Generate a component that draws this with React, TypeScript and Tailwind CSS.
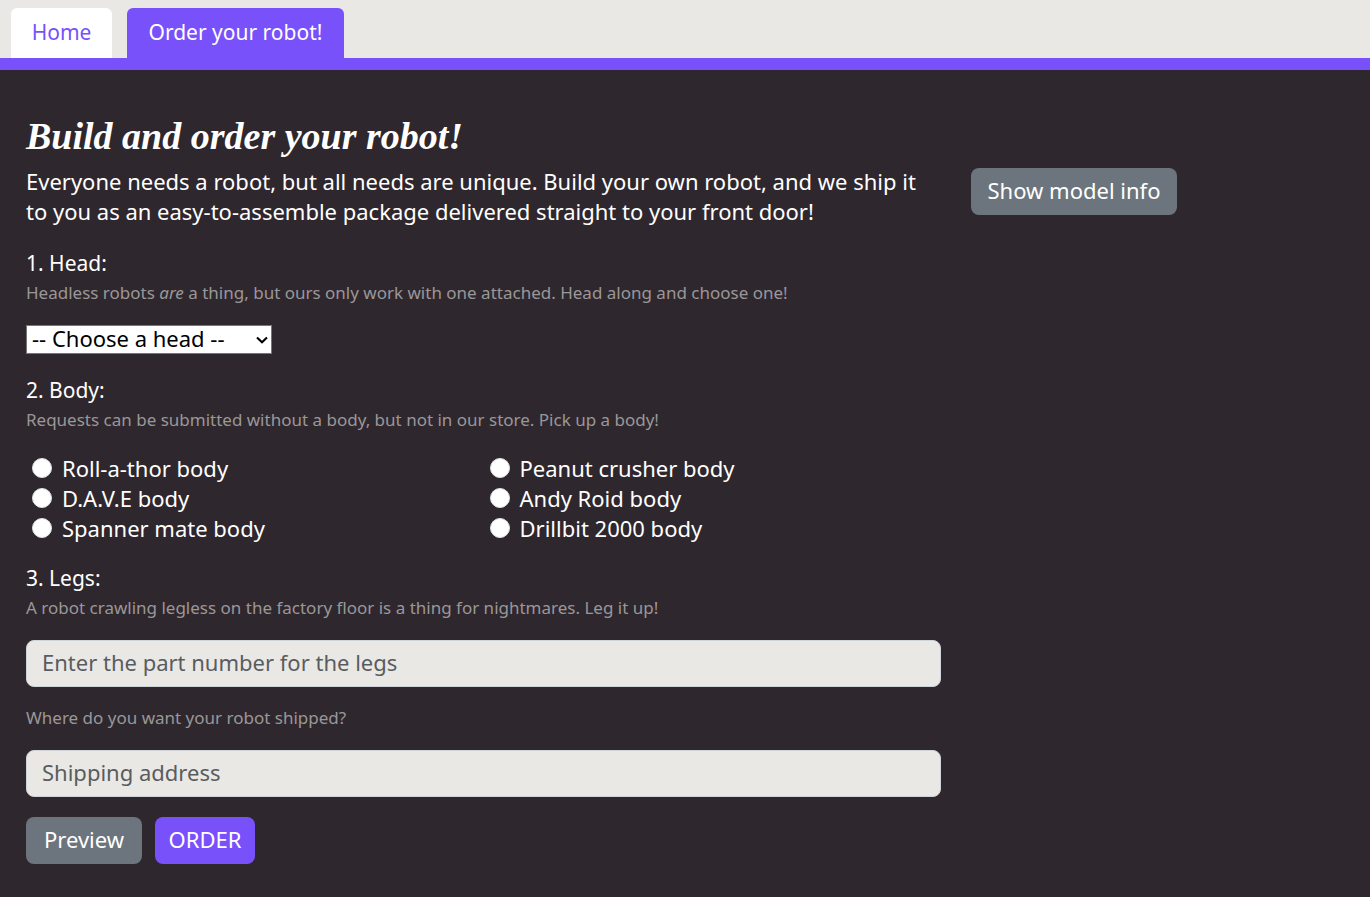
import type { ReactNode } from 'react';

const bodies = [
  'Roll-a-thor body',
  'Peanut crusher body',
  'D.A.V.E body',
  'Andy Roid body',
  'Spanner mate body',
  'Drillbit 2000 body',
];

const fieldClass =
  "block h-[47px] w-full rounded-lg border border-[#ced4da] bg-[#e9e8e4] px-[15px] pb-[3px] text-[22px] leading-[30px] text-[#212529] placeholder:text-[#595c5f] placeholder:opacity-100";

const buttonClass =
  'flex h-[47px] items-center justify-center whitespace-nowrap rounded-lg pb-[3px] text-[22px] leading-[30px] text-white';

function Hint({ children }: { children: ReactNode }) {
  return <p className="mb-[17px] text-[17px] leading-[30px] text-[#9a9798]">{children}</p>;
}

export default function App() {
  return (
    <div className="min-h-screen bg-[#2f272e] font-['Noto_Sans',sans-serif] text-[22px] leading-[30px] text-white">
      <header className="border-b-[12px] border-[#7851fb] bg-[#e9e8e4] text-[21px]">
        <nav className="flex gap-[15px] px-[11px] pt-2">
          <a
            href="#/"
            className="flex h-[50px] w-[101px] items-center justify-center rounded-t-md bg-white pb-[2px] text-[#7851fb]"
          >
            Home
          </a>
          <a
            href="#/robot-order"
            className="flex h-[50px] w-[217px] items-center justify-center whitespace-nowrap rounded-t-md bg-[#7851fb] pb-[2px] text-white"
          >
            Order your robot!
          </a>
        </nav>
      </header>

      <main className="pt-10 pr-[9px] pb-8 pl-[11px]">
        <div className="flex">
          <div className="w-[70%] px-[15px]">
            <h1 className="mb-2 pt-1 font-['Liberation_Serif',serif] text-[38px] leading-[44px] font-bold italic">
              Build and order your robot!
            </h1>
            <p className="mb-[22px]">
              Everyone needs a robot, but all needs are unique. Build your own robot, and we ship it
              to you as an easy-to-assemble package delivered straight to your front door!
            </p>

            <form onSubmit={(event) => event.preventDefault()}>
              <label htmlFor="head" className="block text-[21px] leading-[30px]">
                1. Head:
              </label>
              <Hint>
                Headless robots <em>are</em> a thing, but ours only work with one attached. Head
                along and choose one!
              </Hint>
              <div className="mb-[21px] grid w-[246px] items-center">
                <select
                  id="head"
                  className="col-start-1 row-start-1 h-[29px] w-full appearance-none border border-[#767676] bg-white pr-6 pb-[2px] pl-[5px] text-[22px] leading-[25px] text-black"
                >
                  <option>-- Choose a head --</option>
                  <option>Roll-a-thor head</option>
                  <option>Peanut crusher head</option>
                  <option>D.A.V.E head</option>
                  <option>Andy Roid head</option>
                  <option>Spanner mate head</option>
                  <option>Drillbit 2000 head</option>
                </select>
                <svg
                  aria-hidden="true"
                  viewBox="0 0 12 8"
                  className="pointer-events-none col-start-1 row-start-1 mr-1 h-2 w-3 justify-self-end"
                >
                  <path d="M1 1.5 6 6.3 11 1.5" fill="none" stroke="#000" strokeWidth="2.1" />
                </svg>
              </div>

              <fieldset className="mb-5">
                <legend className="text-[21px] leading-[30px]">2. Body:</legend>
                <Hint>
                  Requests can be submitted without a body, but not in our store. Pick up a body!
                </Hint>
                <div className="grid grid-cols-2 pt-px">
                  {bodies.map((body) => (
                    <label key={body} className="flex items-center gap-[10px] pl-[6px]">
                      <input
                        type="radio"
                        name="body"
                        value={body}
                        className="size-5 appearance-none rounded-full border border-[#dee2e6] bg-white checked:border-[6px] checked:border-[#7851fb]"
                      />
                      {body}
                    </label>
                  ))}
                </div>
              </fieldset>

              <label htmlFor="legs" className="block text-[21px] leading-[30px]">
                3. Legs:
              </label>
              <Hint>
                A robot crawling legless on the factory floor is a thing for nightmares. Leg it up!
              </Hint>
              <input
                id="legs"
                type="text"
                placeholder="Enter the part number for the legs"
                className={fieldClass}
              />

              <label
                htmlFor="address"
                className="mt-4 mb-[17px] block text-[17px] leading-[30px] text-[#9a9798]"
              >
                Where do you want your robot shipped?
              </label>
              <input
                id="address"
                type="text"
                placeholder="Shipping address"
                className={fieldClass}
              />

              <div className="mt-5 flex gap-[13px]">
                <button type="button" className={`${buttonClass} w-[116px] bg-[#6c757d]`}>
                  Preview
                </button>
                <button type="submit" className={`${buttonClass} w-[100px] bg-[#7851fb]`}>
                  ORDER
                </button>
              </div>
            </form>
          </div>

          <div className="w-[30%] px-[15px] pt-[58px]">
            <button type="button" className={`${buttonClass} w-[206px] bg-[#6c757d]`}>
              Show model info
            </button>
          </div>
        </div>
      </main>
    </div>
  );
}
